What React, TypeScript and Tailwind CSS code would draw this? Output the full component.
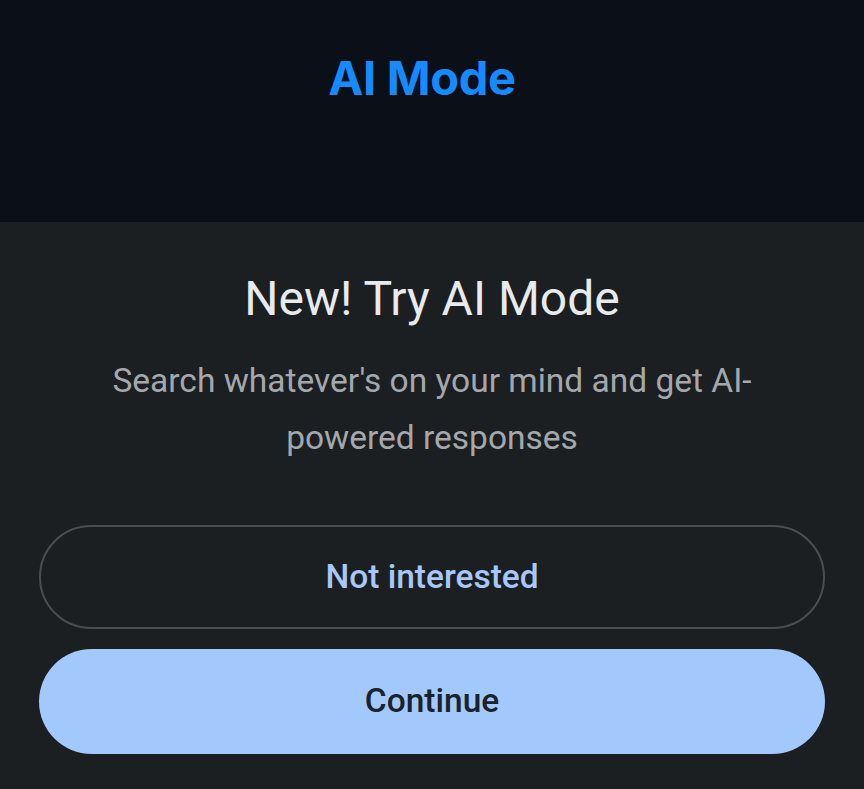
import React from "react";

export default function App() {
  return (
    <div className="w-[864px] h-[789px] flex flex-col overflow-hidden bg-[#1b1f22]" style={{ fontFamily: "Roboto, 'Noto Sans', sans-serif" }}>
      <div className="h-[222px] shrink-0 bg-[#0b0f17] flex justify-center pt-[49px] pr-[20px]">
        <div className="text-[47px] leading-[58px] font-bold text-[#168bff] tracking-[-0.3px]" style={{ fontFamily: "Inter, 'Noto Sans', sans-serif" }}>
          AI Mode
        </div>
      </div>
      <div className="flex-1 flex flex-col items-center pt-[49px] px-[39px]">
        <h1 className="text-[48px] leading-[56px] font-normal text-[#e8eaed]">New! Try AI Mode</h1>
        <p className="mt-[25px] w-[720px] text-center text-[33.5px] leading-[57px] text-[#a4a8ac]">
          Search whatever's on your mind and get AI-powered responses
        </p>
        <button className="mt-[59px] w-full h-[104px] rounded-full border-2 border-[#4a4e52] text-[33.5px] font-medium text-[#a8c7fa]">
          Not interested
        </button>
        <button className="mt-[20px] w-full h-[105px] rounded-full bg-[#a3c9fc] text-[33.5px] font-medium text-[#1a222c]">
          Continue
        </button>
      </div>
    </div>
  );
}
